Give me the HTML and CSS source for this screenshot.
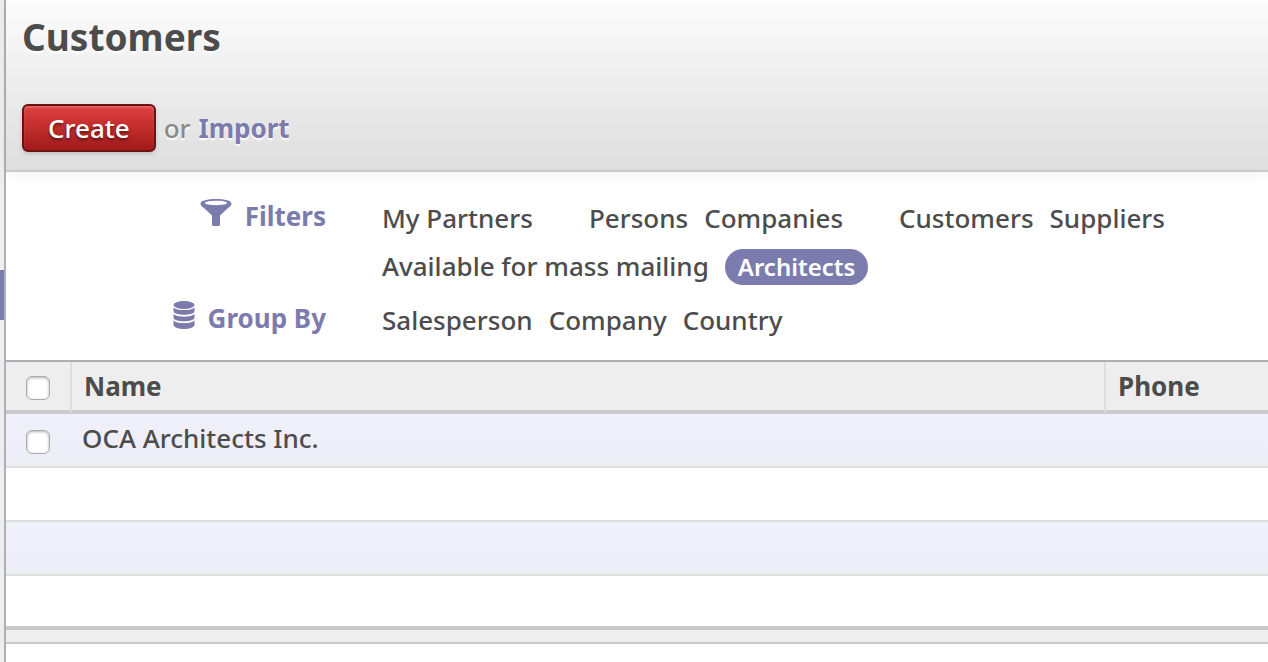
FILE: index.html
```html
<!DOCTYPE html>
<html lang="en">
<head>
<meta charset="utf-8">
<title>Customers</title>
<link rel="stylesheet" href="styles.css">
</head>
<body>
<div class="app">
  <aside class="rail"><div class="rail-marker"></div></aside>
  <main class="content">
    <header class="header">
      <h1 class="title">Customers</h1>
      <div class="actions">
        <button class="create" type="button">Create</button>
        <span class="or">or</span>
        <a class="import" href="#">Import</a>
      </div>
    </header>
    <section class="search">
      <div class="facet">
        <h2 class="facet-name">
          <svg class="icon" viewBox="0 0 32 28" width="32" height="28" aria-hidden="true"><path fill="currentColor" fill-rule="evenodd" d="M16 0C24.500 0 31.500 1.600 31.500 4.500C31.500 6.500 30 7.500 28 9L20 16.500V25.500Q20 27 18 27H14Q12 27 12 25.500V16.500L4 9C2 7.500 .500 6.500 .500 4.500C.500 1.600 7.500 0 16 0ZM16 1.800C10 1.800 5 2.600 5 4.100C5 5.500 10 6.200 16 6.200S27 5.500 27 4.100C27 2.600 22 1.800 16 1.800Z"/></svg>
          Filters
        </h2>
        <div class="options">
          <ul class="group"><li><a href="#">My Partners</a></li></ul>
          <ul class="group"><li><a href="#">Persons</a></li><li><a href="#">Companies</a></li></ul>
          <ul class="group"><li><a href="#">Customers</a></li><li><a href="#">Suppliers</a></li></ul>
          <ul class="group"><li><a href="#">Available for mass mailing</a></li><li><a class="selected" href="#">Architects</a></li></ul>
        </div>
      </div>
      <div class="facet">
        <h2 class="facet-name">
          <svg class="icon" viewBox="0 0 22 28" width="22" height="28" aria-hidden="true"><g fill="currentColor"><ellipse cx="11" cy="4" rx="10.500" ry="4"/><path d="M.500 6.200C3 10 19 10 21.500 6.200V10.500C20 14.800 2 14.800 .500 10.500Z"/><path d="M.500 12.800C3 16.600 19 16.600 21.500 12.800V17C20 21.300 2 21.300 .500 17Z"/><path d="M.500 19.300C3 23.100 19 23.100 21.500 19.300V24C20 29.300 2 29.300 .500 24Z"/></g></svg>
          Group By
        </h2>
        <div class="options">
          <ul class="group"><li><a href="#">Salesperson</a></li><li><a href="#">Company</a></li><li><a href="#">Country</a></li></ul>
        </div>
      </div>
    </section>
    <table class="list">
      <thead>
        <tr>
          <th class="check"><input type="checkbox" aria-label="Select all"></th>
          <th>Name</th>
          <th class="phone">Phone</th>
        </tr>
      </thead>
      <tbody>
        <tr><td class="check"><input type="checkbox" aria-label="Select OCA Architects Inc."></td><td>OCA Architects Inc.</td><td></td></tr>
        <tr><td class="check"></td><td></td><td></td></tr>
        <tr><td class="check"></td><td></td><td></td></tr>
        <tr><td class="check"></td><td></td><td></td></tr>
      </tbody>
      <tfoot><tr><td colspan="3"></td></tr></tfoot>
    </table>
  </main>
</div>
</body>
</html>
```
FILE: styles.css
```css
* { box-sizing: border-box; }
body {
  margin: 0;
  background: #fff;
  color: #4c4c4c;
  font: 500 26px/36px "Noto Sans", "Open Sans", sans-serif;
}
a { color: inherit; text-decoration: none; }
.app { display: flex; min-height: 100vh; }
.rail {
  flex: 0 0 6px;
  padding-top: 270px;
  background: #eeedef;
  border-right: 2px solid #afb0b6;
}
.rail-marker { height: 50px; background: #7c7bad; }
.content { flex: 1; min-width: 0; }
.header {
  padding: 12px 16px 18px;
  border-bottom: 2px solid #cacaca;
  background: linear-gradient(#fcfcfc, #dedede);
  box-shadow: 0 2px 12px rgba(0, 0, 0, 0.06);
}
.title {
  margin: 0 0 42px;
  font-size: 37px;
  line-height: 50px;
  text-shadow: 0 2px 2px #fff;
}
.actions { display: flex; align-items: center; gap: 8px; text-shadow: 0 2px 2px #fff; }
.create {
  height: 48px;
  padding: 0 24px;
  border: 2px solid #6b1212;
  border-radius: 6px;
  background: linear-gradient(#df3f3f, #a21a1a);
  box-shadow: 0 2px 4px rgba(0, 0, 0, 0.15), inset 0 2px 2px rgba(255, 255, 255, 0.2);
  color: #fff;
  font: inherit;
  text-shadow: 0 2px 3px rgba(0, 0, 0, 0.5);
}
.or { color: #8a8a8a; }
.import { color: #7c7bad; font-weight: bold; }
.search { padding: 22px 16px 16px; }
.facet { display: flex; }
.facet-name {
  display: flex;
  justify-content: flex-end;
  flex: 0 0 304px;
  margin: 0;
  padding-top: 4px;
  color: #7c7bad;
  font-size: 26px;
  line-height: 36px;
}
.icon { margin: 1px 13px 0 0; }
.options { display: flex; flex-wrap: wrap; flex: 1; padding-left: 56px; }
.group {
  display: flex;
  gap: 16px;
  margin: 0;
  padding: 0 56px 0 0;
  list-style: none;
  line-height: 48px;
}
.group:last-child { padding-right: 0; }
.facet + .facet { margin-top: 6px; }
.selected {
  display: inline-block;
  padding: 0 13px;
  border-radius: 18px;
  background: #7c7bad;
  color: #fff;
  font-size: 24px;
  font-weight: 600;
  line-height: 36px;
}
.list {
  width: 100%;
  border-collapse: separate;
  border-spacing: 0;
  table-layout: fixed;
  border-top: 2px solid #afb0b6;
}
.list th {
  height: 52px;
  padding: 0 12px;
  border-bottom: 4px solid #cacaca;
  border-left: 2px solid #dedede;
  background: #eee;
  text-align: left;
}
.list .check { width: 64px; padding: 4px 20px 0; border-left: 0; line-height: 0; }
.list .phone { width: 164px; }
.list td { height: 54px; padding: 0 12px 4px; border-bottom: 2px solid #dedede; }
.list tbody tr:nth-child(odd) td { background: linear-gradient(#f0f0fa, #ededf6); }
.list tbody tr:last-child td { border-bottom: 4px solid #cacaca; }
.list tfoot td { height: 14px; padding: 0; border-bottom: 2px solid #cacaca; background: #eee; }
.list input {
  appearance: none;
  width: 24px;
  height: 24px;
  margin: 0;
  border: 1px solid #aaa;
  border-radius: 6px;
  background: #fff;
  box-shadow: inset 0 1px 3px rgba(0, 0, 0, 0.3);
}
```
